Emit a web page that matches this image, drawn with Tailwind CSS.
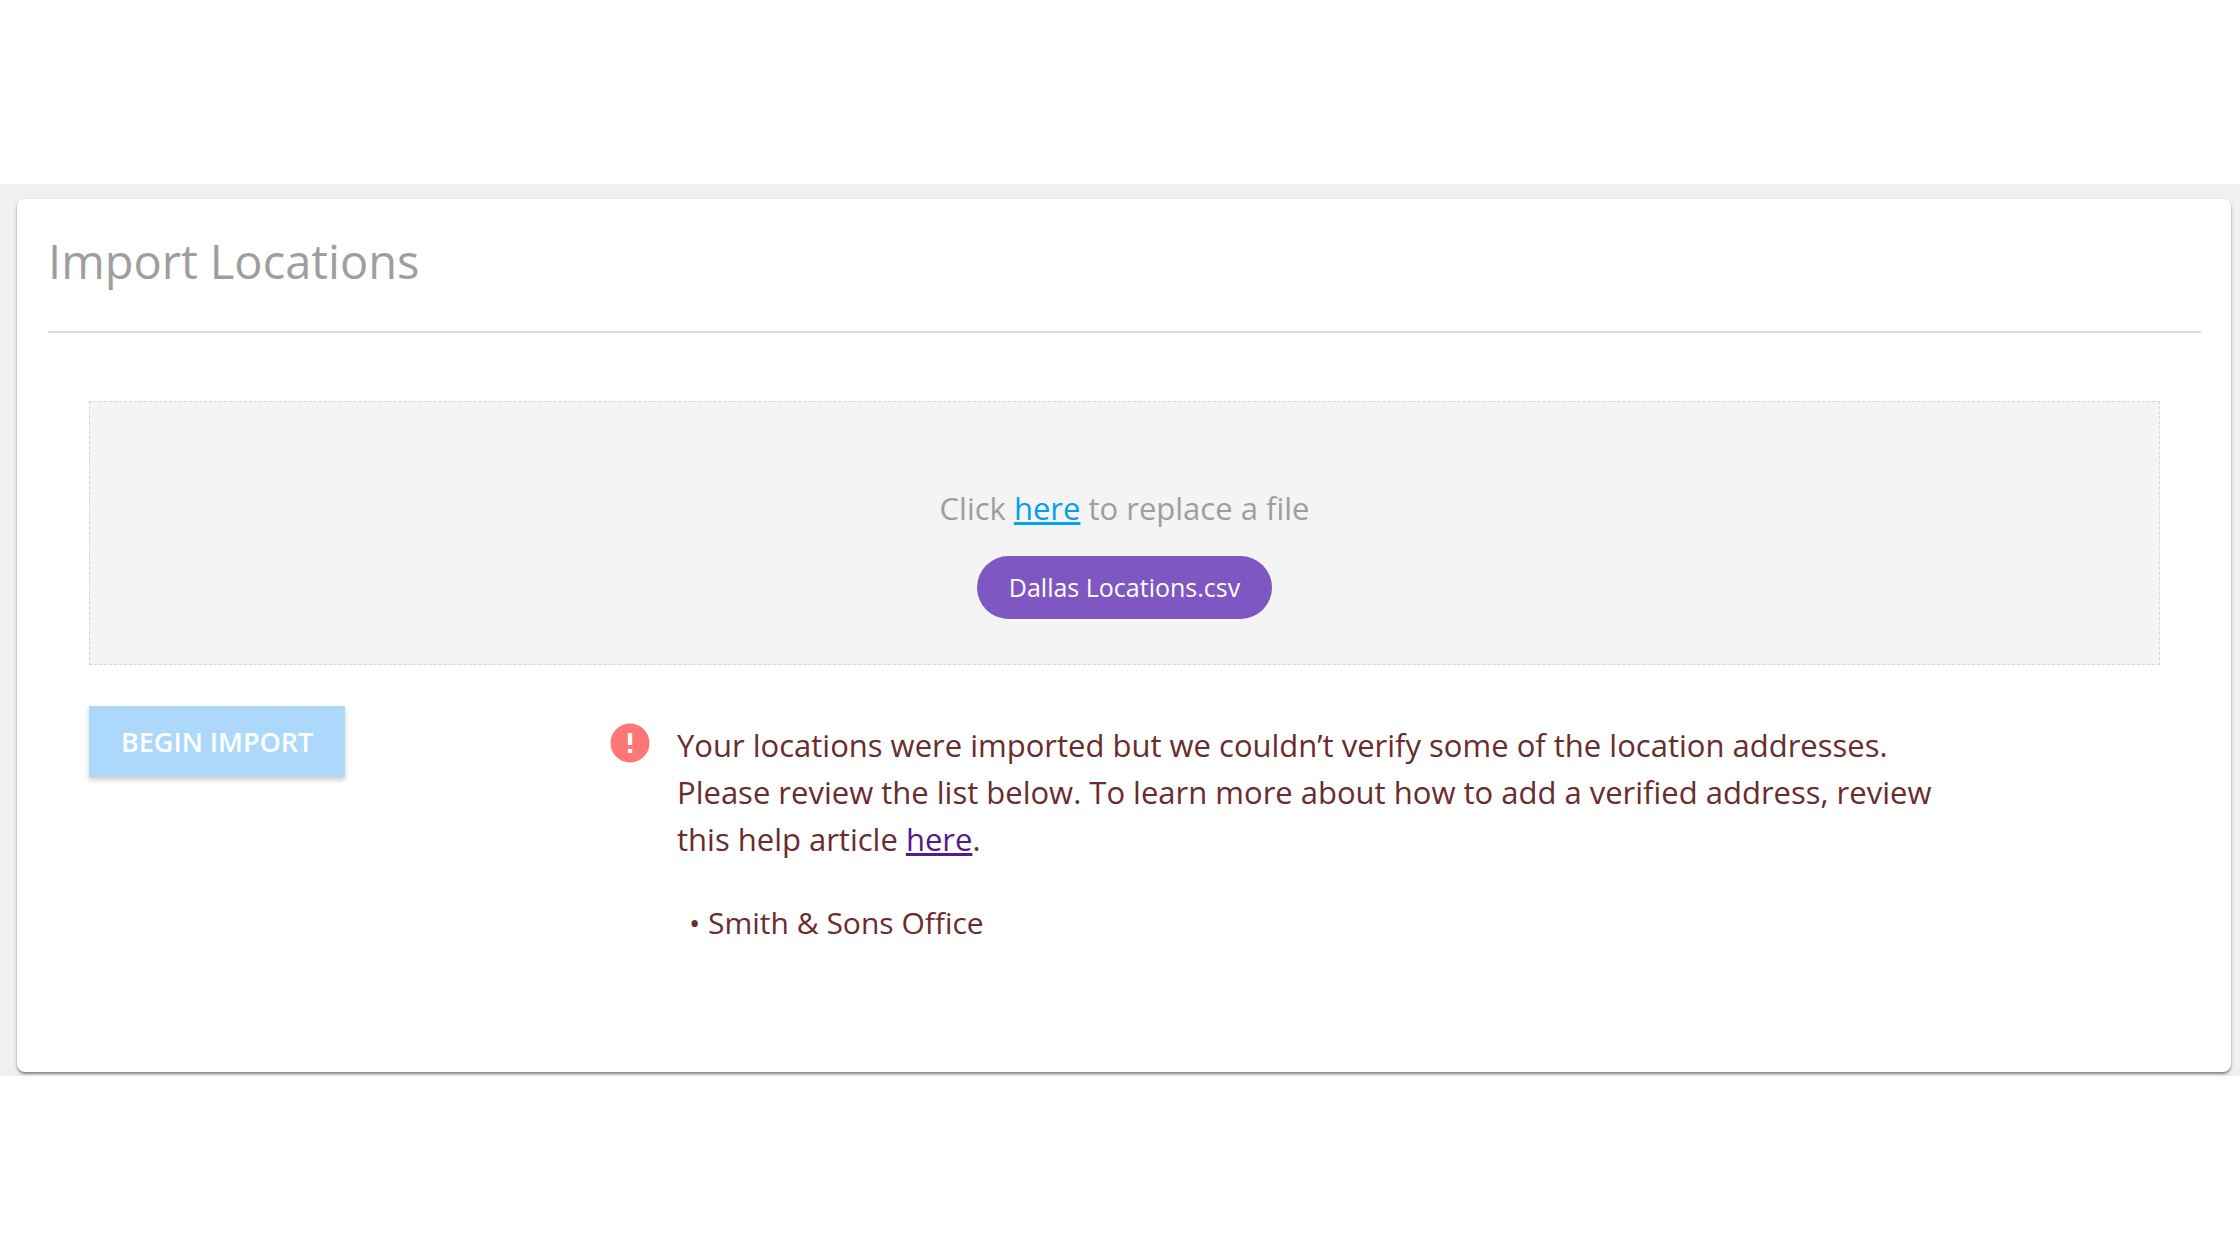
<!DOCTYPE html>
<html lang="en">
<head>
  <meta charset="UTF-8" />
  <meta name="viewport" content="width=device-width, initial-scale=1.0"/>
  <title>Import Locations</title>
  <script src="https://cdn.jsdelivr.net/npm/@tailwindcss/browser@4"></script>
</head>
<body class="min-h-screen bg-white font-['Open_Sans','Noto_Sans',sans-serif] antialiased">

  <div class="pt-[184px]">
    <main class="overflow-hidden bg-[#f0f0f0] pt-[15px] pr-[9px] pb-1 pl-[17px]">

      <!-- Import card -->
      <section class="rounded-lg bg-white pr-[30px] pb-[126px] pl-[31px] shadow-[0_2px_2px_rgba(0,0,0,0.35),0_2px_5px_rgba(0,0,0,0.15)]">
        <h1 class="border-b-2 border-[#e0e0e0] pt-[30px] pb-[38px] text-[47px] leading-[64px] text-[#9e9e9e]">Import Locations</h1>

        <div class="px-[41px] pt-[68px]">

          <!-- Drop zone -->
          <div class="flex flex-col items-center gap-6 border border-dashed border-[#d6d6d6] bg-[#f4f4f4] pt-[83px] pb-[45px] text-center">
            <p class="text-[31px] leading-[47px] text-[#9e9e9e]">Click <a href="#" class="text-[#039ff0] underline">here</a> to replace a file</p>
            <span class="rounded-full bg-[#7e57c2] px-8 text-[25px] leading-[63px] text-white">Dallas Locations.csv</span>
          </div>

          <div class="flex items-start pt-[41px]">
            <div class="w-[521px] shrink-0">
              <button type="button" class="bg-[#acd9fb] px-8 text-[27px] leading-[71px] font-semibold text-white shadow-[0_3px_5px_rgba(0,0,0,0.2)]">BEGIN IMPORT</button>
            </div>

            <!-- Result message -->
            <div class="flex items-start gap-[27px] pt-4 text-[#6a2c2c]">
              <svg class="mt-px h-10 w-10 shrink-0" viewBox="0 0 40 40" role="img" aria-label="Error">
                <circle cx="20" cy="20" r="19.5" fill="#ff7676"/>
                <path d="M17.8 10h4.4v12h-4.4zM17.8 26h4.4v4h-4.4z" fill="#fff"/>
              </svg>
              <div class="max-w-[1280px]">
                <p class="text-[31px] leading-[47px]">Your locations were imported but we couldn’t verify some of the location addresses. Please review the list below. To learn more about how to add a verified address, review this help article <a href="#" class="text-[#551a8b] underline">here</a>.</p>
                <ul class="pt-9 pl-3 text-[30px] leading-[47px]">
                  <li>• Smith &amp; Sons Office</li>
                </ul>
              </div>
            </div>
          </div>

        </div>
      </section>

    </main>
  </div>

</body>
</html>
